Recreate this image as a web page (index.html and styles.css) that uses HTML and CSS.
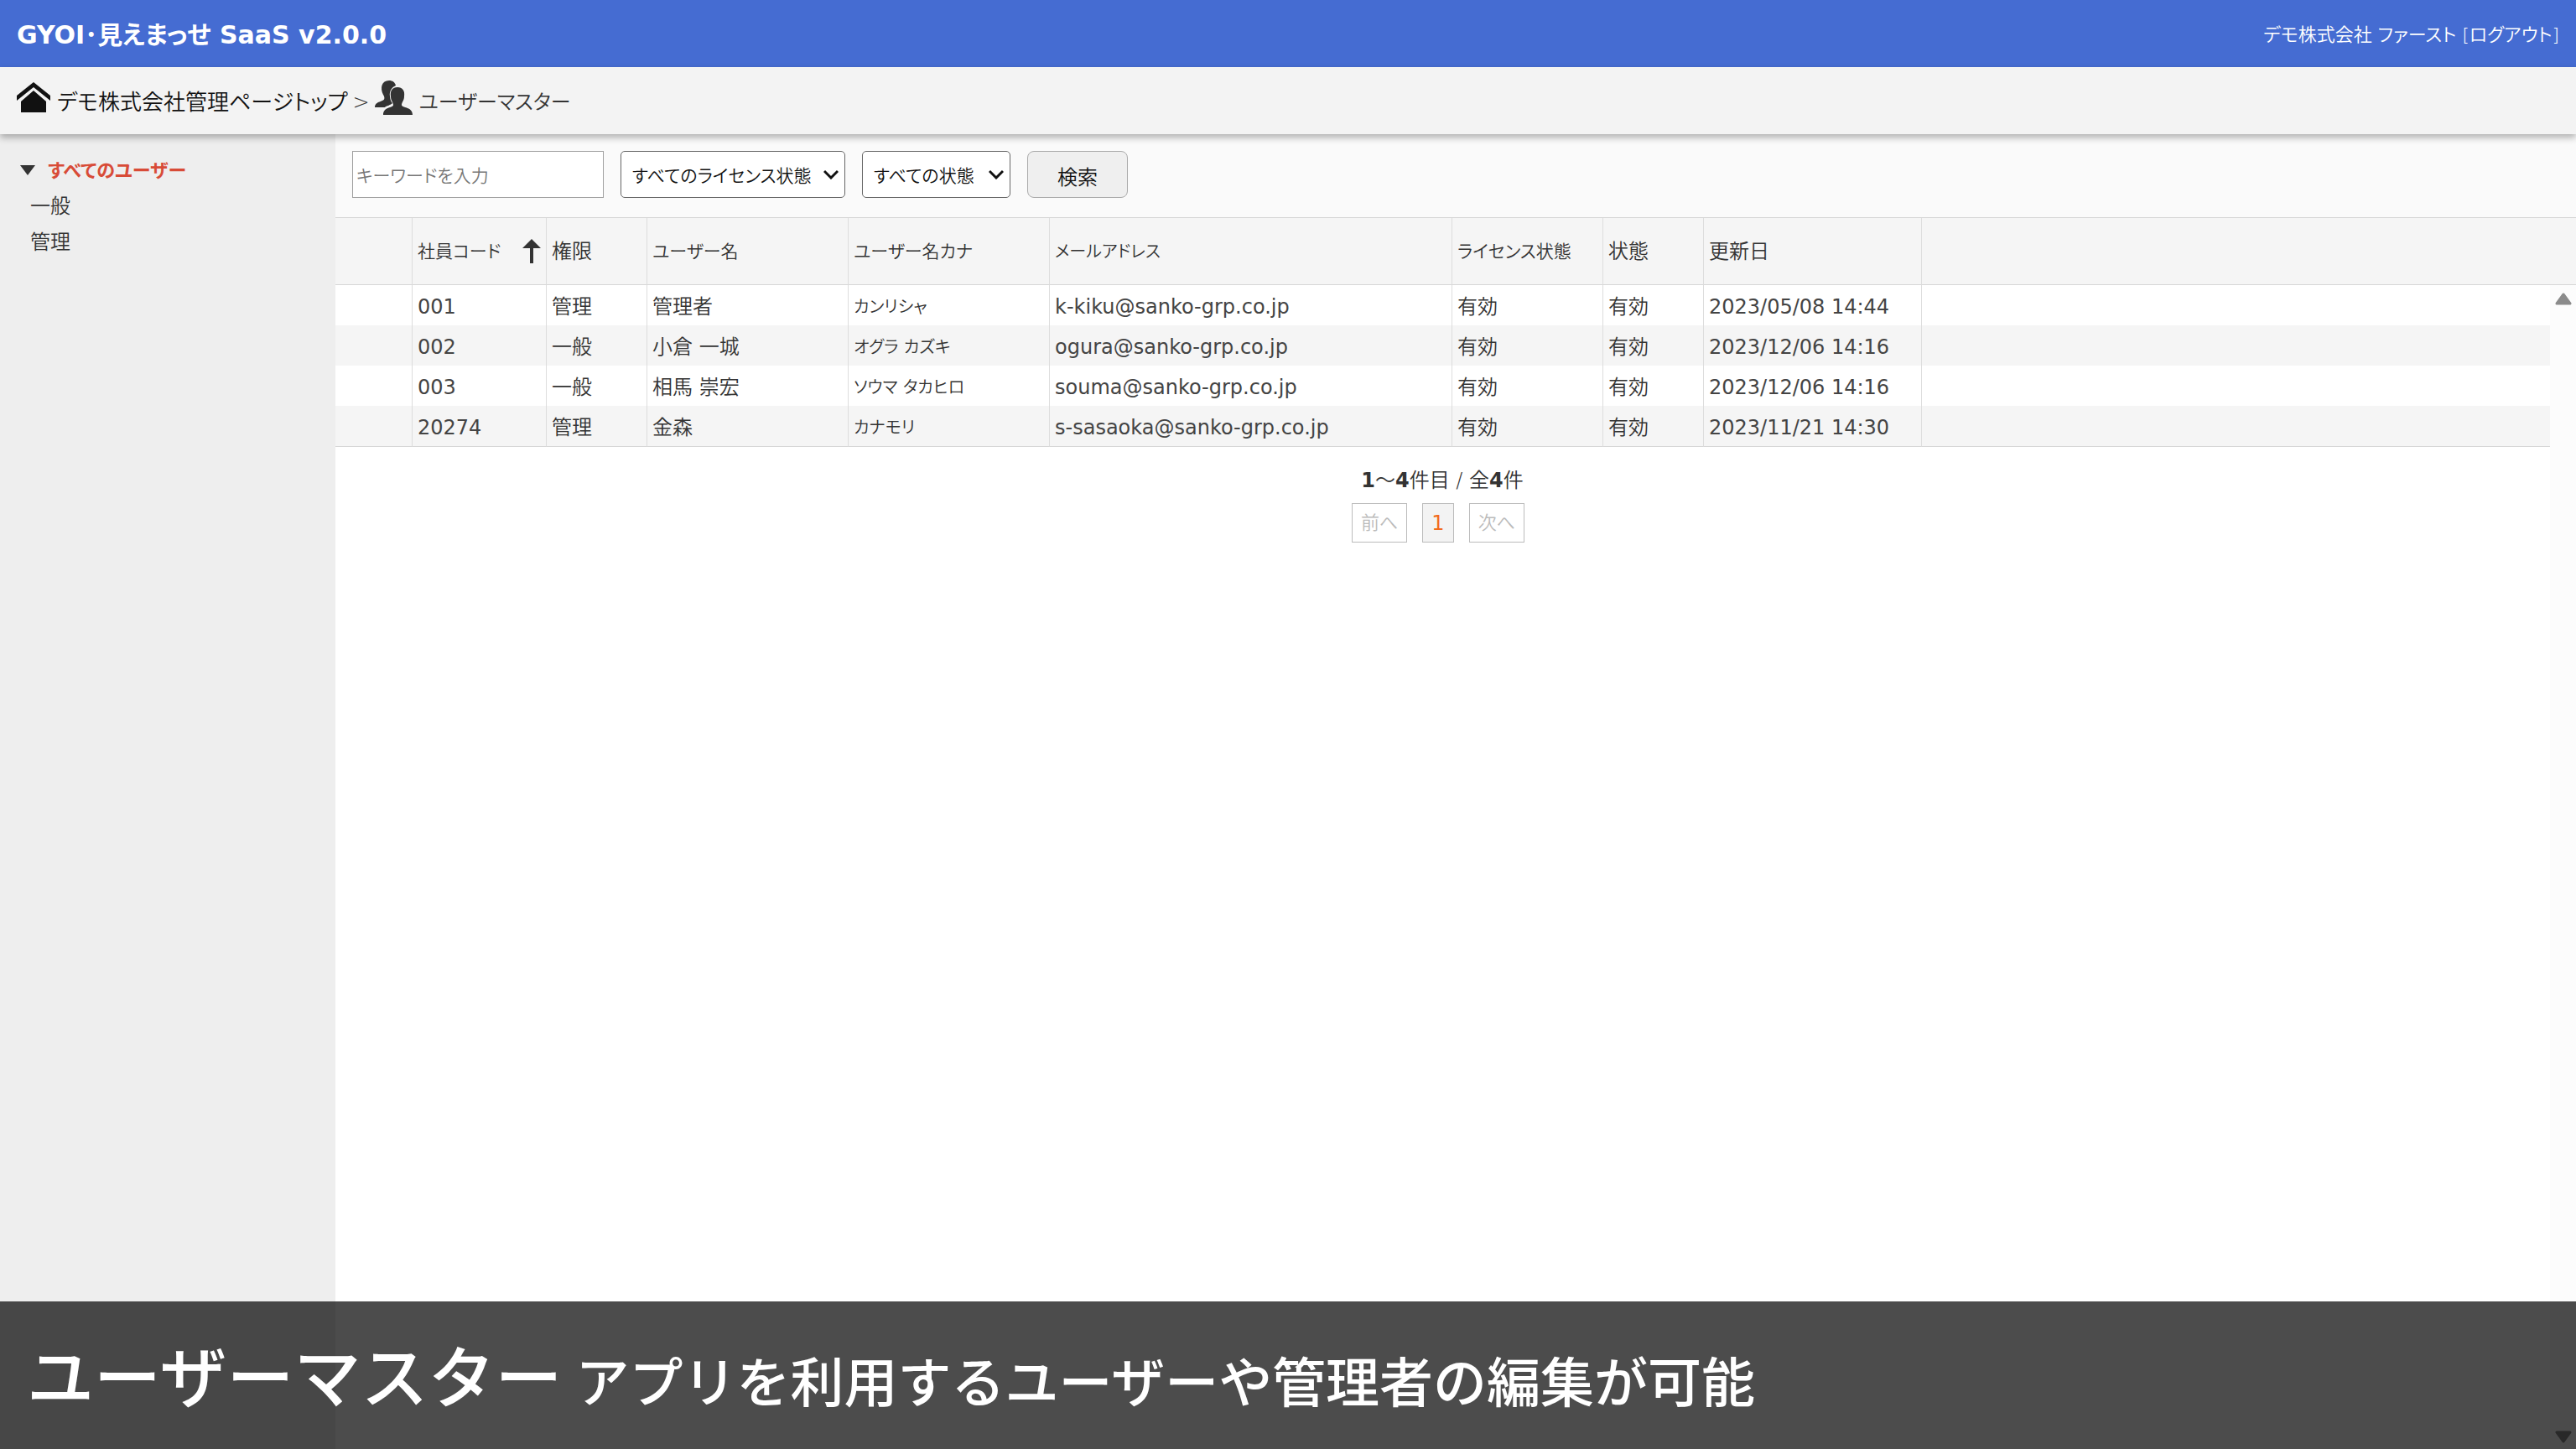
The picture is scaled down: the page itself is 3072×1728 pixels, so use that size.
FILE: index.html
```html
<!DOCTYPE html>
<html lang="ja">
<head>
<meta charset="utf-8">
<title>ユーザーマスター</title>
<link rel="stylesheet" href="styles.css">
</head>
<body>
<header class="topbar">
  <h1 class="brand">GYOI･見えまっせ SaaS v2.0.0</h1>
  <div class="account">デモ株式会社 ファースト [<a href="#logout">ログアウト</a>]</div>
</header>
<nav class="breadcrumb" aria-label="パンくず">
  <a class="crumb crumb-home" href="#top">
    <svg class="icon-home" viewBox="0 0 40 37" aria-hidden="true"><path d="M20 0 40 16v6L20 6 0 22v-6z"/><path d="M20 10 35 23v13H5V23z"/></svg>
    デモ株式会社管理ページトップ</a>
  <span class="crumb-sep">&gt;</span>
  <span class="crumb crumb-here">
    <svg class="icon-users" viewBox="0 0 45 41" aria-hidden="true"><path d="M17 0c4 0 7 2 8 6-5 2-8 7-7 13 0 4 2 7 3 8-3 3-7 3-9 5H0c0-5 4-6 9-8 3-1 3-4 1-7-4-8-2-17 7-17z"/><path d="M27 8c6 0 9 4 8 11 0 5-3 7-3 10 0 4 13 2 13 12H10c0-10 12-8 12-12 0-3-3-5-3-10-1-7 2-11 8-11z"/></svg>
    ユーザーマスター</span>
</nav>
<div class="workspace">
  <aside class="sidebar">
    <ul class="tree">
      <li class="tree-root"><svg class="icon-caret" viewBox="0 0 18 12" aria-hidden="true"><path d="M0 0h18l-9 12z"/></svg><a class="is-active" href="#all">すべてのユーザー</a></li>
      <li class="tree-item"><a href="#general">一般</a></li>
      <li class="tree-item"><a href="#admin">管理</a></li>
    </ul>
  </aside>
  <main class="content">
    <form class="filters">
      <input class="field keyword kana" type="text" aria-label="キーワード" placeholder="キーワードを入力">
      <span class="select-wrap">
        <select class="field select license kana" aria-label="ライセンス状態"><option>すべてのライセンス状態</option></select>
        <svg class="icon-chevron" viewBox="0 0 18 12" aria-hidden="true"><path d="M1 2l8 8 8-8"/></svg>
      </span>
      <span class="select-wrap">
        <select class="field select status kana" aria-label="状態"><option>すべての状態</option></select>
        <svg class="icon-chevron" viewBox="0 0 18 12" aria-hidden="true"><path d="M1 2l8 8 8-8"/></svg>
      </span>
      <button class="field search" type="button">検索</button>
    </form>
    <section class="list">
      <table class="users">
        <colgroup><col class="c-mark"><col class="c-code"><col class="c-role"><col class="c-name"><col class="c-name"><col class="c-mail"><col class="c-license"><col class="c-role"><col class="c-date"><col></colgroup>
        <thead>
          <tr><th></th><th class="kana"><span class="sorted">社員コード<svg class="icon-sort" viewBox="0 0 22 30" aria-hidden="true"><path d="M11 0 22 11h-9v18H9V11H0z"/></svg></span></th><th>権限</th><th class="kana">ユーザー名</th><th class="kana">ユーザー名カナ</th><th class="kana-only">メールアドレス</th><th class="kana">ライセンス状態</th><th>状態</th><th>更新日</th><th></th></tr>
        </thead>
        <tbody>
          <tr><td></td><td class="latin">001</td><td>管理</td><td>管理者</td><td class="kana-only">カンリシャ</td><td class="latin">k-kiku@sanko-grp.co.jp</td><td>有効</td><td>有効</td><td class="latin">2023/05/08 14:44</td><td></td></tr>
          <tr><td></td><td class="latin">002</td><td>一般</td><td>小倉 一城</td><td class="kana-only">オグラ カズキ</td><td class="latin">ogura@sanko-grp.co.jp</td><td>有効</td><td>有効</td><td class="latin">2023/12/06 14:16</td><td></td></tr>
          <tr><td></td><td class="latin">003</td><td>一般</td><td>相馬 崇宏</td><td class="kana-only">ソウマ タカヒロ</td><td class="latin">souma@sanko-grp.co.jp</td><td>有効</td><td>有効</td><td class="latin">2023/12/06 14:16</td><td></td></tr>
          <tr><td></td><td class="latin">20274</td><td>管理</td><td>金森</td><td class="kana-only">カナモリ</td><td class="latin">s-sasaoka@sanko-grp.co.jp</td><td>有効</td><td>有効</td><td class="latin">2023/11/21 14:30</td><td></td></tr>
        </tbody>
      </table>
      <div class="pager">
        <p class="pager-count"><b>1</b>～<b>4</b>件目 / 全<b>4</b>件</p>
        <div class="pager-buttons">
          <button class="page" type="button" disabled>前へ</button>
          <button class="page is-current" type="button" aria-current="page">1</button>
          <button class="page" type="button" disabled>次へ</button>
        </div>
      </div>
      <div class="scrollbar" aria-hidden="true">
        <svg class="icon-scroll" viewBox="0 0 20 15"><path d="M10 2 18 13H2z"/></svg>
        <svg class="icon-scroll" viewBox="0 0 20 15"><path d="M10 13 2 2h16z"/></svg>
      </div>
    </section>
  </main>
</div>
<div class="caption"><strong>ユーザーマスター</strong><span>アプリを利用するユーザーや管理者の編集が可能</span></div>
</body>
</html>
```
FILE: styles.css
```css
* { box-sizing: border-box; }

body {
  margin: 0;
  height: 100vh;
  display: flex;
  flex-direction: column;
  overflow: hidden;
  font: 350 24px/32px "DejaVu Sans", "Noto Sans CJK JP", sans-serif;
  font-feature-settings: "palt";
  color: #333;
  background: #fff;
}

a { color: inherit; text-decoration: none; }
b { font-weight: 700; }

.kana { font-size: 21px; }
.kana-only { font-size: 20px; }
.latin { font-weight: 400; color: #444; }

.topbar {
  flex: none;
  height: 80px;
  padding: 3px 20px 0;
  display: flex;
  align-items: center;
  justify-content: space-between;
  background: #456cd2;
  color: #fff;
}

.brand { margin: 0; font-size: 30px; line-height: 40px; }
.account { font-size: 22px; }

.breadcrumb {
  flex: none;
  position: relative;
  z-index: 1;
  height: 80px;
  padding: 3px 20px 0;
  display: flex;
  align-items: center;
  gap: 6px;
  font-size: 26px;
  background: #f3f3f3;
  box-shadow: 0 4px 8px rgba(0, 0, 0, .3);
}

.crumb { display: flex; align-items: center; gap: 8px; }
.crumb-home { color: #111; }
.crumb-here { font-size: 24px; }
.crumb-sep { font-size: 24px; }
.icon-home { width: 40px; height: 37px; margin-bottom: 10px; fill: #111; }
.icon-users { width: 45px; height: 41px; margin-bottom: 10px; fill: #333; }

.workspace { flex: 1; min-height: 0; display: flex; }

.sidebar { flex: none; width: 400px; padding: 22px 24px; background: #eee; }
.tree { margin: 0; padding: 0; list-style: none; line-height: 43px; }
.tree-root { display: flex; align-items: center; gap: 15px; }
.tree-item { padding-left: 12px; }
.is-active { color: #d84b37; font-size: 22px; font-weight: bold; }
.icon-caret { width: 18px; height: 12px; margin-bottom: 2px; fill: #333; }

.content { flex: 1; min-width: 0; display: flex; flex-direction: column; }

.filters {
  flex: none;
  height: 100px;
  padding: 20px;
  display: flex;
  gap: 20px;
  background: #fafafa;
  border-bottom: 1px solid #d6d6d6;
}

.field {
  height: 56px;
  padding: 3px 13px 0;
  font-family: inherit;
  font-weight: inherit;
  font-feature-settings: inherit;
  color: #111;
  background: #fff;
  border: 1px solid #666;
  border-radius: 5px;
}

.keyword { width: 300px; padding: 3px 4px 0; border-color: #a0a0a0; border-radius: 0; }
.keyword::placeholder { color: #777; opacity: 1; }
.select-wrap { position: relative; }
.select { appearance: none; }
.license { width: 268px; }
.status { width: 177px; }
.icon-chevron {
  position: absolute;
  top: 22px;
  right: 8px;
  width: 18px;
  height: 12px;
  fill: none;
  stroke: #111;
  stroke-width: 3;
  pointer-events: none;
}
.search { width: 120px; font-size: 24px; background: #efefef; border-color: #aaa; border-radius: 8px; }

.list { flex: 1; min-height: 0; position: relative; }

.users { width: 100%; table-layout: fixed; border-collapse: separate; border-spacing: 0; }
.c-mark { width: 92px; }
.c-code { width: 160px; }
.c-role { width: 120px; }
.c-name { width: 240px; }
.c-mail { width: 480px; }
.c-license { width: 180px; }
.c-date { width: 260px; }
.users th, .users td {
  padding: 0 6px;
  text-align: left;
  white-space: nowrap;
  border-right: 1px solid #ddd;
}
.users th { height: 80px; font-weight: 350; background: #f5f5f5; border-bottom: 1px solid #d6d6d6; }
.users td { height: 48px; padding-top: 4px; }
.users tr > :last-child { border-right: 0; }
.users tbody tr:nth-child(even) { background: #f5f5f5; }
.users tbody tr:last-child td { height: 49px; border-bottom: 1px solid #d6d6d6; }
.sorted { display: flex; align-items: center; justify-content: space-between; }
.icon-sort { width: 22px; height: 30px; fill: #333; }

.pager { padding: 24px 32px 0 0; text-align: center; }
.pager-count { margin: 0; }
.pager-buttons { display: flex; justify-content: center; gap: 18px; margin-top: 11px; padding-right: 10px; }
.page {
  height: 47px;
  padding: 0 10px;
  font: inherit;
  font-size: 22px;
  font-feature-settings: inherit;
  color: #bbb;
  background: #fff;
  border: 1px solid #bbb;
}
.is-current { font-size: 24px; font-weight: 400; color: #f26b1d; background: #f3f3f3; }

.scrollbar {
  position: absolute;
  top: 80px;
  right: 0;
  bottom: 0;
  width: 31px;
  padding: 9px 6px 7px;
  display: flex;
  flex-direction: column;
  justify-content: space-between;
  background: #fcfcfc;
}
.icon-scroll { width: 20px; height: 15px; fill: #8b8b8b; stroke: #8b8b8b; stroke-width: 3; stroke-linejoin: round; }

.caption {
  position: absolute;
  left: 0;
  right: 0;
  bottom: 0;
  z-index: 2;
  height: 176px;
  padding: 0 32px;
  display: flex;
  align-items: baseline;
  gap: 16px;
  font: 500 64px/170px "Noto Sans CJK JP", sans-serif;
  font-feature-settings: normal;
  color: #fff;
  background: rgba(0, 0, 0, .7);
}
.caption strong { font-size: 80px; font-weight: 500; }
```
